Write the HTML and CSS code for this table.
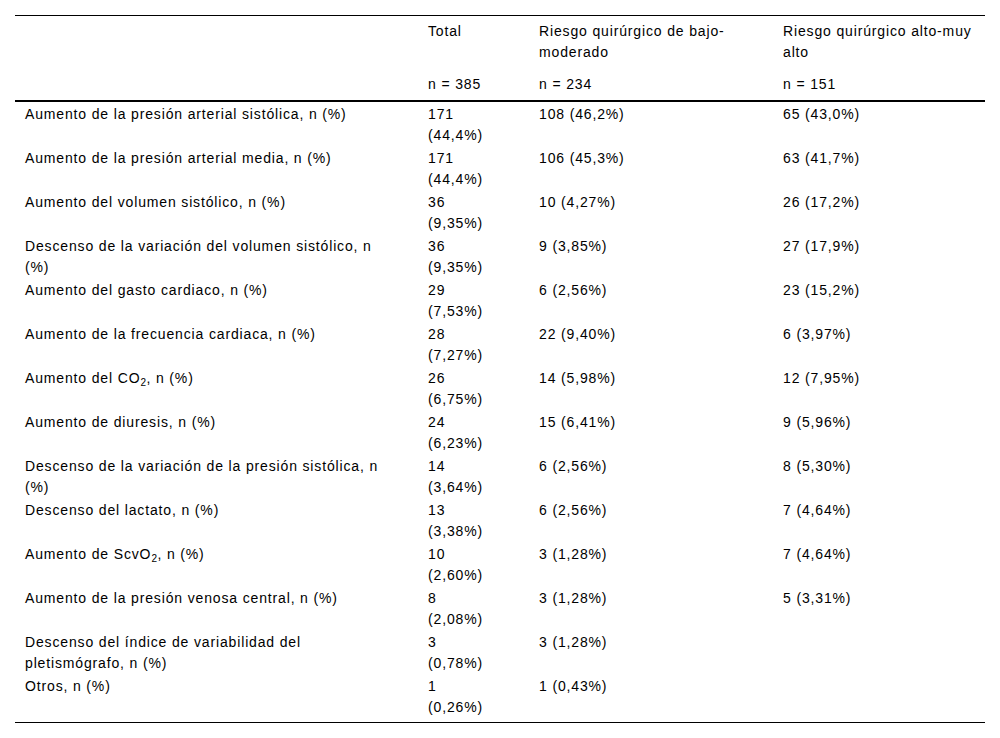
FILE: index.html
```html
<!DOCTYPE html>
<html lang="es">
<head>
<meta charset="utf-8">
<link rel="stylesheet" href="styles.css">
</head>
<body>
<table class="data">
  <colgroup>
    <col class="c1"><col class="c2"><col class="c3"><col class="c4">
  </colgroup>
  <thead>
    <tr class="h1">
      <th></th>
      <th>Total</th>
      <th>Riesgo quirúrgico de bajo-moderado</th>
      <th>Riesgo quirúrgico alto-muy alto</th>
    </tr>
    <tr class="h2">
      <th></th>
      <th>n = 385</th>
      <th>n = 234</th>
      <th>n = 151</th>
    </tr>
  </thead>
  <tbody>
    <tr><td>Aumento de la presión arterial sistólica, n (%)</td><td>171 (44,4%)</td><td>108 (46,2%)</td><td>65 (43,0%)</td></tr>
    <tr><td>Aumento de la presión arterial media, n (%)</td><td>171 (44,4%)</td><td>106 (45,3%)</td><td>63 (41,7%)</td></tr>
    <tr><td>Aumento del volumen sistólico, n (%)</td><td>36 (9,35%)</td><td>10 (4,27%)</td><td>26 (17,2%)</td></tr>
    <tr><td>Descenso de la variación del volumen sistólico, n (%)</td><td>36 (9,35%)</td><td>9 (3,85%)</td><td>27 (17,9%)</td></tr>
    <tr><td>Aumento del gasto cardiaco, n (%)</td><td>29 (7,53%)</td><td>6 (2,56%)</td><td>23 (15,2%)</td></tr>
    <tr><td>Aumento de la frecuencia cardiaca, n (%)</td><td>28 (7,27%)</td><td>22 (9,40%)</td><td>6 (3,97%)</td></tr>
    <tr><td>Aumento del CO<sub>2</sub>, n (%)</td><td>26 (6,75%)</td><td>14 (5,98%)</td><td>12 (7,95%)</td></tr>
    <tr><td>Aumento de diuresis, n (%)</td><td>24 (6,23%)</td><td>15 (6,41%)</td><td>9 (5,96%)</td></tr>
    <tr><td>Descenso de la variación de la presión sistólica, n (%)</td><td>14 (3,64%)</td><td>6 (2,56%)</td><td>8 (5,30%)</td></tr>
    <tr><td>Descenso del lactato, n (%)</td><td>13 (3,38%)</td><td>6 (2,56%)</td><td>7 (4,64%)</td></tr>
    <tr><td>Aumento de ScvO<sub>2</sub>, n (%)</td><td>10 (2,60%)</td><td>3 (1,28%)</td><td>7 (4,64%)</td></tr>
    <tr><td>Aumento de la presión venosa central, n (%)</td><td>8 (2,08%)</td><td>3 (1,28%)</td><td>5 (3,31%)</td></tr>
    <tr><td>Descenso del índice de variabilidad del pletismógrafo, n (%)</td><td>3 (0,78%)</td><td>3 (1,28%)</td><td></td></tr>
    <tr class="last"><td>Otros, n (%)</td><td>1 (0,26%)</td><td>1 (0,43%)</td><td></td></tr>
  </tbody>
</table>
</body>
</html>
```

FILE: styles.css
```css
html, body {
  margin: 0;
  padding: 0;
  background: #fff;
}
body {
  padding: 15px 15px 0 15px;
  font-family: "Liberation Sans", Arial, sans-serif;
  font-size: 14px;
  letter-spacing: 0.85px;
  color: #000;
}
.data {
  width: 970px;
  border-collapse: collapse;
  table-layout: fixed;
  border-top: 1px solid #000;
  border-bottom: 1px solid #000;
}
.c1 { width: 403px; }
.c2 { width: 111px; }
.c3 { width: 244px; }
.c4 { width: 212px; }
.data th {
  font-weight: normal;
  text-align: left;
  vertical-align: top;
  line-height: 21px;
}
.data .h1 th {
  padding: 5px 20px 0 10px;
}
.data .h2 th {
  padding: 11px 20px 5px 10px;
  border-bottom: 2px solid #000;
}
.data td {
  vertical-align: top;
  padding: 2px 20px 0 10px;
  line-height: 21px;
}
.data td:nth-child(2) {
  padding-right: 40px;
}
.data .h1 th:nth-child(3),
.data .h1 th:nth-child(4),
.data td:nth-child(3),
.data td:nth-child(4) {
  padding-right: 8px;
}
.data .last td {
  padding-bottom: 4px;
}
.data sub {
  font-size: 10px;
  line-height: 0;
  vertical-align: -3px;
  letter-spacing: 0.5px;
}
```
